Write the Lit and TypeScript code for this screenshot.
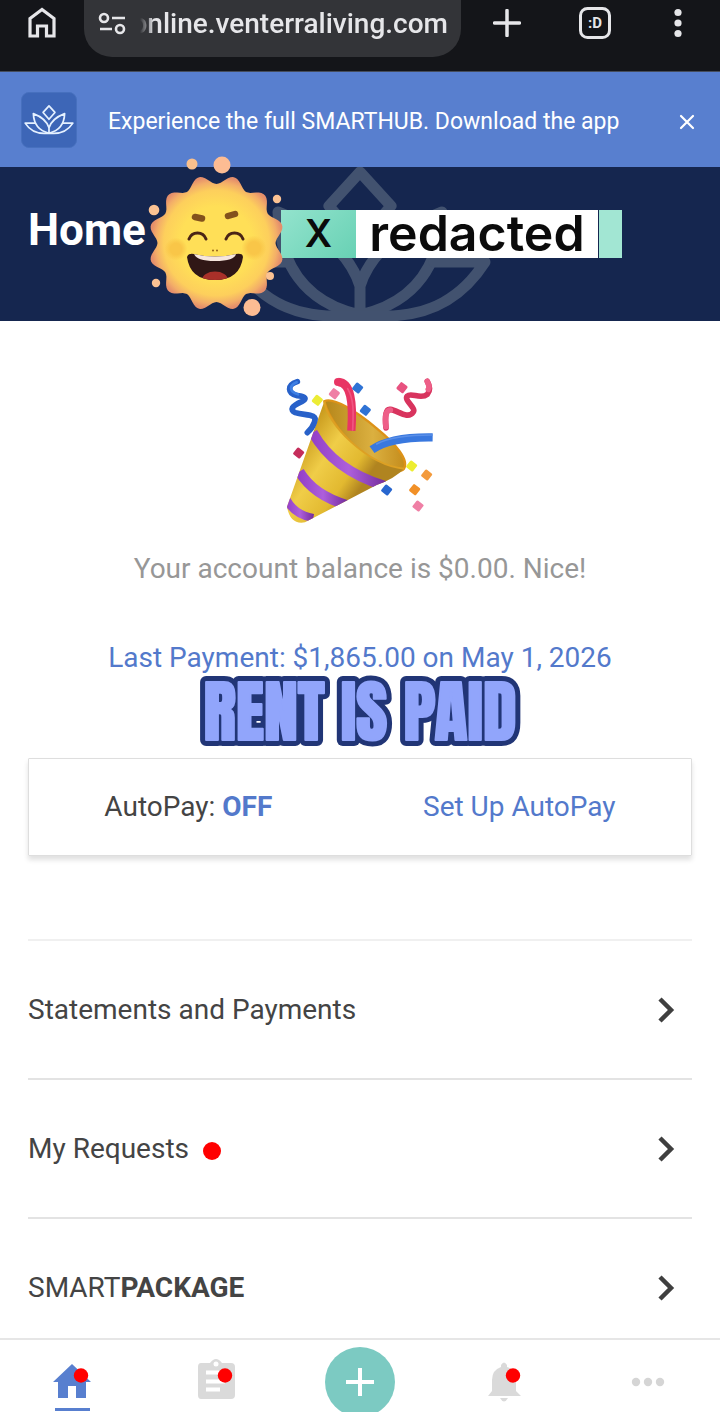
import { LitElement, html, css, svg, nothing } from "lit";
import { customElement, property } from "lit/decorators.js";

const lotus = (stroke: number) => svg`
  <g fill="none" stroke="currentColor" stroke-width=${stroke} stroke-linejoin="round" stroke-linecap="round">
    <path d="M360 172L391 206L360 242L329 206Z" />
    <path d="M360 286C370 254 400 228 442 212C440 262 418 302 360 315C302 302 280 262 278 212C320 228 350 254 360 286V315" />
    <path d="M434 262H485C462 298 430 316 385 316H335C290 316 258 298 235 262H286" />
  </g>`;

// Twelve rounded rays around the face.
const sunOutline = (() => {
  const points: string[] = [];
  for (let deg = 0; deg < 360; deg += 2) {
    const a = (deg * Math.PI) / 180;
    const r = 63.5 - 4.5 * Math.cos(12 * a);
    points.push(`${(216.5 + r * Math.sin(a)).toFixed(1)} ${(243 - r * Math.cos(a)).toFixed(1)}`);
  }
  return `M${points.join("L")}Z`;
})();

const sparks = [
  [192, 164, 5.5, "#fac08d"], [222, 165, 8.5, "#fdbc93"], [154, 210, 5.3, "#fbc293"], [277, 199, 4.2, "#fbc293"],
  [156, 283, 4.2, "#fbc293"], [270, 276, 4, "#fbc293"], [252, 307.5, 8.5, "#fdbc93"],
] as const;

const confetti = [
  [142, 121, "#ecec35"], [193, 101, "#ef7fa5"], [263, 84, "#2f73d5"], [286, 151, "#2f73d5"], [396, 83, "#e85280"],
  [86, 279, "#c52d5b"], [425, 318, "#eded30"], [470, 345, "#f39a3c"], [434, 389, "#f19027"], [350, 390, "#2866cf"], [444, 438, "#ef7fa5"],
] as const;

@customElement("menu-row")
class MenuRow extends LitElement {
  @property({ type: Boolean }) alert = false;

  static styles = css`
    :host { display: block; }
    .row {
      display: flex; align-items: center; box-sizing: border-box; height: 139px;
      padding-right: 16px; border-top: 2px solid #e3e3e3;
      color: #444; font-size: 28px; line-height: 32px; text-decoration: none;
    }
    :host(:first-child) .row { border-top-color: #f0f0f0; }
    .dot { width: 18px; height: 18px; margin: 4px 0 0 14px; border-radius: 50%; background: #f00; }
    .chevron { margin-left: auto; }
  `;

  render() {
    return html`<a class="row" href="#">
      <span><slot></slot></span>
      ${this.alert ? html`<span class="dot"></span>` : nothing}
      <svg class="chevron" width="20" height="28" viewBox="0 0 20 28" aria-hidden="true">
        <path d="M4 3L15 14L4 25" fill="none" stroke="#3f3f3f" stroke-width="4.5" />
      </svg>
    </a>`;
  }
}

@customElement("app-root")
class AppRoot extends LitElement {
  static styles = css`
    :host {
      display: flex; flex-direction: column; height: 100vh; overflow: hidden;
      background: #fff; font-family: Roboto, "Liberation Sans", sans-serif;
    }
    * { box-sizing: border-box; }
    svg { display: block; flex: none; }
    button { display: grid; place-items: center; padding: 0; border: 0; background: none; color: inherit; font: inherit; }
    a { text-decoration: none; }
    h1, p { margin: 0; }

    .browser {
      display: flex; align-items: flex-start; flex: none; height: 72px;
      padding-right: 32px; background: #141519; color: #e6e6e9; border-bottom: 1px solid #454d5c;
    }
    .browser button { height: 46px; }
    .go-home { width: 84px; }
    .address {
      display: flex; align-items: center; flex: 1; min-width: 0; height: 57px; padding: 0 13px 10px 14px;
      border-radius: 0 0 28px 28px; background: #333438;
    }
    .url {
      display: flex; justify-content: flex-end; flex: 1; min-width: 0; overflow: hidden;
      font-size: 28px; line-height: 36px; font-weight: 500; white-space: nowrap;
      -webkit-mask-image: linear-gradient(90deg, transparent 14px, #000 28px);
      mask-image: linear-gradient(90deg, transparent 14px, #000 28px);
    }
    .tools { display: flex; flex: none; width: 227px; justify-content: space-between; padding-left: 32px; }

    .banner {
      display: flex; align-items: center; flex: none; height: 95px; padding: 0 20px 0 21px;
      background: #587fcf; color: #fff; font-size: 23px; line-height: 28px;
    }
    .app-icon {
      display: grid; place-items: center; width: 56px; height: 56px; margin-right: 31px;
      border: 1px solid #4770be; border-radius: 8px; background: #3d66b7;
    }
    .promo { display: flex; flex: 1; justify-content: space-between; align-items: center; padding-top: 4px; }
    .close { width: 26px; height: 28px; }

    .header {
      position: relative; display: grid; grid-template-columns: 1fr auto 1fr; flex: none; height: 154px;
      background: #15264f; color: #fff;
    }
    .header h1 { padding: 39px 0 0 28px; font-size: 44px; line-height: 48px; font-weight: 700; }
    .watermark { color: #42526f; }
    .sun { position: absolute; left: 146px; top: -13px; z-index: 1; }
    .redacted {
      position: absolute; left: 281px; top: 43px; display: flex; height: 48px;
      color: #0b0b0b; font-family: Inter, sans-serif; line-height: 46px; text-align: center;
    }
    .tag-x { width: 75px; background: linear-gradient(135deg, #93e3cd, #68d1b4); font-size: 38px; font-weight: 600; }
    .tag-word { width: 242px; background: #fff; font-size: 50px; font-weight: 600; }
    .tag-end { width: 23px; margin-left: 1px; background: #a2e6d3; }

    .main { flex: 1; min-height: 0; overflow: hidden; padding: 55px 28px 0; font-size: 28px; line-height: 32px; text-align: center; }
    .popper { margin: 0 auto; }
    .balance { margin-top: 29px; color: #979797; }
    .last { margin-top: 57px; color: #5379cb; }
    .sticker { margin: 0 auto; overflow: visible; }
    .sticker text {
      font-family: Impact, Anton, "Roboto Condensed", Roboto, sans-serif;
      font-size: 68px; font-weight: 400; text-anchor: middle; stroke-linejoin: round;
    }
    .edge { fill: #213576; stroke: #213576; stroke-width: 12px; }
    .fill { fill: #91a5fb; stroke: #91a5fb; stroke-width: 2px; }
    .card {
      display: flex; justify-content: space-around; align-items: center; height: 98px;
      border: 1px solid #dedede; border-radius: 1px; box-shadow: 0 4px 5px #0000001f; color: #444;
    }
    .card b, .card a { color: #5379cb; }
    .menu { margin-top: 83px; text-align: left; }

    .nav { display: grid; grid-template-columns: repeat(5, 1fr); flex: none; height: 74px; border-top: 2px solid #e6e6e6; background: #fff; }
    .tab { display: flex; justify-content: center; }
    .tab svg { margin-top: 18px; }
    .fab { width: 70px; height: 70px; margin: 7px auto 0; border-radius: 50%; background: #7ccac2; }
  `;

  render() {
    return html`
      <div class="browser">
        <button class="go-home" aria-label="Home page">
          <svg width="32" height="36" viewBox="0 0 32 36"><path d="M4 31V13.500L16 4.500L28 13.500V31H20.500V21H11.500V31Z" fill="none" stroke="currentColor" stroke-width="3.200" /></svg>
        </button>
        <div class="address">
          <svg width="28" height="24" viewBox="0 0 28 24" fill="none" stroke="currentColor" stroke-width="2.600">
            <circle cx="6" cy="6" r="4" /><path d="M14 6H27M2 17H14" /><circle cx="22" cy="17" r="4" />
          </svg>
          <div class="url">online.venterraliving.com</div>
        </div>
        <div class="tools">
          <button aria-label="New tab"><svg width="28" height="28" viewBox="0 0 28 28"><path d="M14 1.500V26.500M1.500 14H26.500" stroke="currentColor" stroke-width="3.500" stroke-linecap="round" /></svg></button>
          <button aria-label="Tabs"><svg width="34" height="34" viewBox="0 0 34 34"><rect x="2.500" y="2.500" width="29" height="29" rx="7" fill="none" stroke="currentColor" stroke-width="3" /><text x="17" y="22" text-anchor="middle" fill="currentColor" font-size="15" font-weight="700">:D</text></svg></button>
          <button aria-label="Menu"><svg width="20" height="30" viewBox="0 0 20 30" fill="currentColor"><circle cx="10" cy="4.500" r="3.600" /><circle cx="10" cy="15" r="3.600" /><circle cx="10" cy="25.500" r="3.600" /></svg></button>
        </div>
      </div>

      <div class="banner">
        <div class="app-icon"><svg width="50" height="31" viewBox="229 164 262 158" color="#e5f1ff">${lotus(9)}</svg></div>
        <div class="promo">
          <span>Experience the full SMARTHUB. Download the app</span>
          <button class="close" aria-label="Close"><svg width="16" height="16" viewBox="0 0 16 16"><path d="M2 2L14 14M14 2L2 14" stroke="currentColor" stroke-width="2.200" stroke-linecap="round" /></svg></button>
        </div>
      </div>

      <header class="header">
        <h1>Home</h1>
        <svg class="watermark" width="262" height="154" viewBox="229 167 262 154">${lotus(11)}</svg>
        <div class="redacted"><span class="tag-x">X</span><span class="tag-word">redacted</span><span class="tag-end"></span></div>
        ${this.sun()}
      </header>

      <main class="main">
        ${this.popper()}
        <p class="balance">Your account balance is $0.00. Nice!</p>
        <p class="last">Last Payment: $1,865.00 on May 1, 2026</p>
        <svg class="sticker" width="400" height="84" viewBox="0 0 400 84">
          <text class="edge" x="200" y="66" aria-hidden="true">RENT IS PAID</text>
          <text class="fill" x="200" y="66">RENT IS PAID</text>
        </svg>
        <div class="card">
          <span>AutoPay: <b>OFF</b></span>
          <a href="#">Set Up AutoPay</a>
        </div>
        <div class="menu">
          <menu-row>Statements and Payments</menu-row>
          <menu-row alert>My Requests</menu-row>
          <menu-row>SMART<b>PACKAGE</b></menu-row>
        </div>
      </main>

      <nav class="nav">
        <a class="tab" href="#" aria-label="Home"><svg width="40" height="54" viewBox="0 0 40 54">
          <path d="M20 6L39 24H34V40H24V28H16V40H6V24H1Z" fill="#587fcf" /><path d="M3 51.500H38" stroke="#587fcf" stroke-width="3" /><circle cx="29" cy="17.500" r="7.200" fill="#f00" />
        </svg></a>
        <a class="tab" href="#" aria-label="Requests"><svg width="40" height="54" viewBox="0 0 40 54">
          <path d="M5 5H14Q20-3 26 5H35Q39 5 39 9V37Q39 41 35 41H5Q2 41 2 37V9Q2 5 5 5Z" fill="#dadada" />
          <circle cx="20" cy="6" r="2.500" fill="#fff" /><path d="M10 14.500H30M10 23.500H29M10 31.500H24" stroke="#fff" stroke-width="4" /><circle cx="29" cy="17.500" r="7.200" fill="#f00" />
        </svg></a>
        <button class="fab" aria-label="Add"><svg width="30" height="30" viewBox="0 0 30 30"><path d="M15 1V29M1 15H29" stroke="#fff" stroke-width="4" /></svg></button>
        <a class="tab" href="#" aria-label="Notifications"><svg width="40" height="54" viewBox="0 0 40 54">
          <path d="M17 9V7Q20 2 23 7V9Q32 11 32 22V33L37 38H4L8 33V22Q8 12 17 9ZM16 40H24Q20 47 16 40Z" fill="#dadada" /><circle cx="29" cy="17.500" r="7.200" fill="#f00" />
        </svg></a>
        <a class="tab" href="#" aria-label="More"><svg width="40" height="54" viewBox="0 0 40 54" fill="#d5d5d5"><circle cx="8" cy="24" r="4.200" /><circle cx="20" cy="24" r="4.200" /><circle cx="32" cy="24" r="4.200" /></svg></a>
      </nav>`;
  }

  private sun() {
    return html`<svg class="sun" width="140" height="164" viewBox="146 154 140 164" aria-hidden="true">
      <defs>
        <radialGradient id="glow"><stop offset=".55" stop-color="#ffdf57" /><stop offset=".8" stop-color="#fdcf5c" /><stop offset=".92" stop-color="#f3ae68" /><stop offset="1" stop-color="#e58f6b" /></radialGradient>
        <radialGradient id="cheek"><stop offset=".5" stop-color="#f9c648" /><stop offset="1" stop-color="#f9c648" stop-opacity="0" /></radialGradient>
        <clipPath id="mouth"><path d="M187 257Q188 253 194 254Q215 259 236 254Q243 253 243 257Q240 280 215 280Q190 280 187 257Z" /></clipPath>
      </defs>
      <path d=${sunOutline} fill="url(#glow)" />
      <circle cx="176" cy="249" r="11.500" fill="url(#cheek)" /><circle cx="254" cy="248" r="12.500" fill="url(#cheek)" />
      <path d="M195 217L202 218.500M228 216L235 214" stroke="#83521c" stroke-width="6.500" stroke-linecap="round" />
      <path d="M189 239C192 231 203 231 206 239M226 239C229 231 240 231 243 239" fill="none" stroke="#4a2416" stroke-width="3" stroke-linecap="round" />
      <g clip-path="url(#mouth)"><rect x="185" y="250" width="60" height="32" fill="#301716" /><ellipse cx="215" cy="280" rx="13" ry="8.500" fill="#a93029" /><path d="M194 253H236Q236 261 215 261Q195 261 194 253Z" fill="#f6e6dd" /></g>
      <circle cx="213" cy="250.500" r="1" fill="#946018" /><circle cx="217" cy="250.500" r="1" fill="#946018" />
      ${sparks.map(([x, y, r, c]) => svg`<circle cx=${x} cy=${y} r=${r} fill=${c} />`)}
    </svg>`;
  }

  private popper() {
    return html`<svg class="popper" width="148" height="148" viewBox="48 48 444 444" role="img" aria-label="Party popper">
      <defs>
        <linearGradient id="gold" x1="70" y1="270" x2="260" y2="400" gradientUnits="userSpaceOnUse"><stop stop-color="#c99a1d" /><stop offset=".4" stop-color="#f0cd48" /><stop offset=".78" stop-color="#e2b930" /><stop offset="1" stop-color="#b08420" /></linearGradient>
        <linearGradient id="inside"><stop stop-color="#b5861a" /><stop offset=".6" stop-color="#dbb040" /><stop offset="1" stop-color="#c48c1c" /></linearGradient>
        <linearGradient id="violet"><stop stop-color="#9440c8" /><stop offset=".5" stop-color="#ad5fdb" /><stop offset="1" stop-color="#762e9e" /></linearGradient>
        <clipPath id="cone"><path d="M163 124C170 190 290 315 402 326Q375 355 320 375L105 487Q60 495 51 440Z" /></clipPath>
      </defs>
      <path d="M163 124C190 110 260 155 320 205C375 249 418 300 402 326C370 365 190 235 163 124Z" fill="url(#inside)" stroke="#dd9218" stroke-width="7" />
      <g clip-path="url(#cone)">
        <rect x="40" y="110" width="380" height="390" fill="url(#gold)" />
        <g fill="none" stroke="url(#violet)" stroke-width="30"><path d="M128 217Q190 330 345 378" /><path d="M88 335Q130 405 230 435" /><path d="M50 420Q75 465 130 474" stroke-width="25" /></g>
      </g>
      <path d="M163 124C170 190 290 315 402 326" fill="none" stroke="#dda023" stroke-width="6" />
      <g fill="none" stroke-linecap="round" stroke-linejoin="round">
        <path d="M205 66C242 68 250 125 244 212" stroke="#e83564" stroke-width="25" stroke-linecap="butt" /><circle cx="204" cy="66" r="12" fill="#e83564" />
        <path d="M233 86C253 120 250 160 248 210" stroke="#f05580" stroke-width="5" />
        <path d="M306 269Q360 230 488 232" stroke="#3978df" stroke-width="25" stroke-linecap="butt" /><path d="M320 252Q370 225 486 225" stroke="#5a8fe8" stroke-width="5" />
        <path d="M82 65C50 75 52 100 82 107Q120 112 95 125C65 138 58 150 76 158C105 167 145 160 133 187Q127 205 112 218" stroke="#2861c9" stroke-width="17" />
        <path d="M80 67C57 76 57 94 84 103" stroke="#3f80e4" stroke-width="8" />
        <path d="M348 204Q342 145 361 148C383 151 414 180 430 156C439 143 400 121 412 108C424 96 452 120 472 103Q485 87 472 64" stroke="#d8345e" stroke-width="17" />
        <path d="M348 200Q342 151 361 150M475 88Q480 82 472 65" stroke="#ee5f88" stroke-width="17" />
      </g>
      ${confetti.map(([x, y, c]) => svg`<rect x=${x - 13} y=${y - 13} width="26" height="26" rx="4" fill=${c} transform="rotate(38 ${x} ${y})" />`)}
    </svg>`;
  }
}
